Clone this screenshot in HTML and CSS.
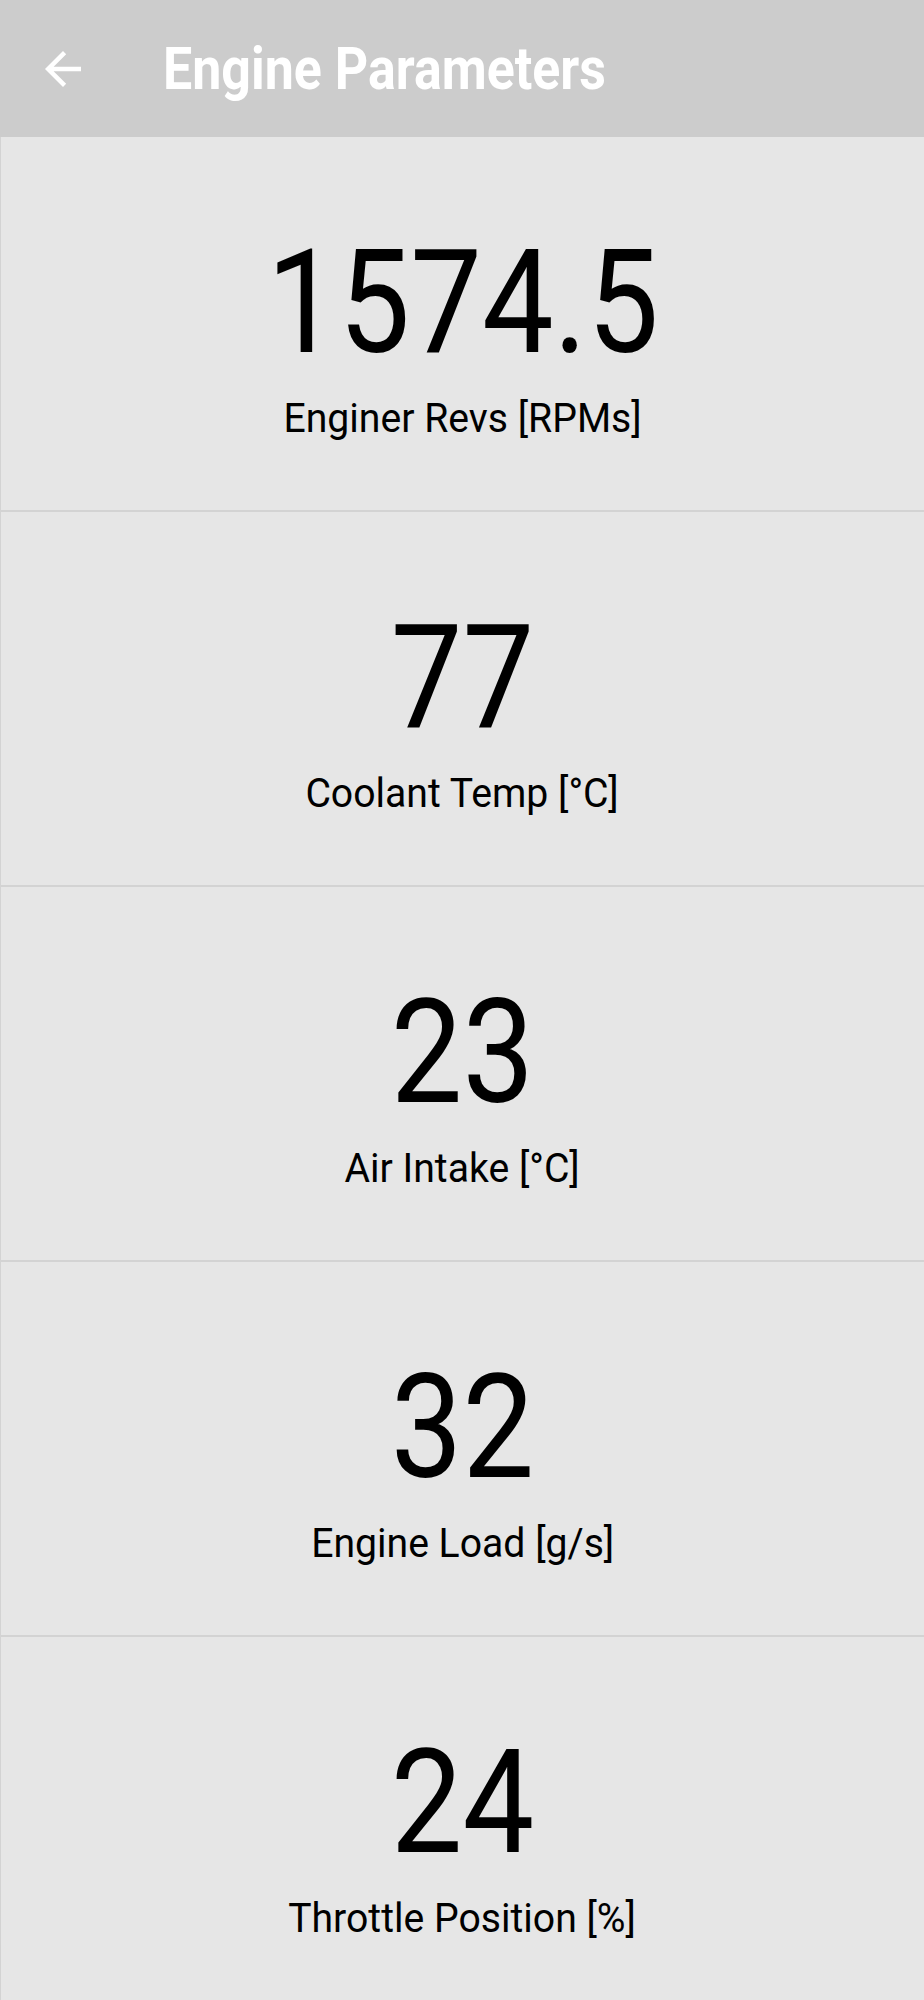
FILE: index.html
```html
<!DOCTYPE html>
<html lang="en">
<head>
    <meta charset="UTF-8">
    <meta name="viewport" content="width=device-width, initial-scale=1.0">
    <title>Engine Parameters</title>
    <link rel="stylesheet" href="styles.css">
</head>
<body>
    <div class="toolbar">
        <button class="back-button" aria-label="Back">
            <svg viewBox="0 0 24 24" width="54" height="54">
                <path d="M20 11H7.83l5.59-5.59L12 4l-8 8 8 8 1.41-1.41L7.83 13H20v-2z" fill="#fff"/>
            </svg>
        </button>
        <h1><span>Engine Parameters</span></h1>
    </div>

    <div class="params">
        <div class="param">
            <div class="value"><span>1574.5</span></div>
            <div class="label"><span>Enginer Revs [RPMs]</span></div>
        </div>
        <div class="param">
            <div class="value"><span>77</span></div>
            <div class="label"><span>Coolant Temp [°C]</span></div>
        </div>
        <div class="param">
            <div class="value"><span>23</span></div>
            <div class="label"><span>Air Intake [°C]</span></div>
        </div>
        <div class="param">
            <div class="value"><span>32</span></div>
            <div class="label"><span>Engine Load [g/s]</span></div>
        </div>
        <div class="param">
            <div class="value"><span>24</span></div>
            <div class="label"><span>Throttle Position [%]</span></div>
        </div>
    </div>
</body>
</html>
```

FILE: styles.css
```css
body {
    margin: 0;
    font-family: Roboto, "Noto Sans", sans-serif;
    background-color: #e6e6e6;
    color: #000;
}
.toolbar {
    height: 137px;
    background-color: #cccccc;
    display: flex;
    align-items: center;
}
.back-button {
    margin-left: 36px;
    padding: 0;
    width: 54px;
    height: 54px;
    border: none;
    background: none;
    display: flex;
}
h1 {
    margin: 0 0 0 73px;
    font-size: 59px;
    font-weight: 700;
    line-height: 1;
    color: #fff;
}
/* text on the device screenshot is a bit narrower than plain Roboto */
h1 span,
.value span,
.label span {
    display: inline-block;
    transform: scaleX(0.88);
}
h1 span {
    transform-origin: left center;
}
.label span {
    transform: scaleX(0.955);
}
.param {
    height: 373px;
    border-left: 1px solid #d3d3d3;
    border-bottom: 2px solid #d3d3d3;
    background-color: #e6e6e6;
    text-align: center;
}
.value {
    padding-top: 93px;
    font-size: 145px;
    line-height: 145px;
}
.label {
    margin-top: 23px;
    font-size: 41px;
    line-height: 41px;
}
```
